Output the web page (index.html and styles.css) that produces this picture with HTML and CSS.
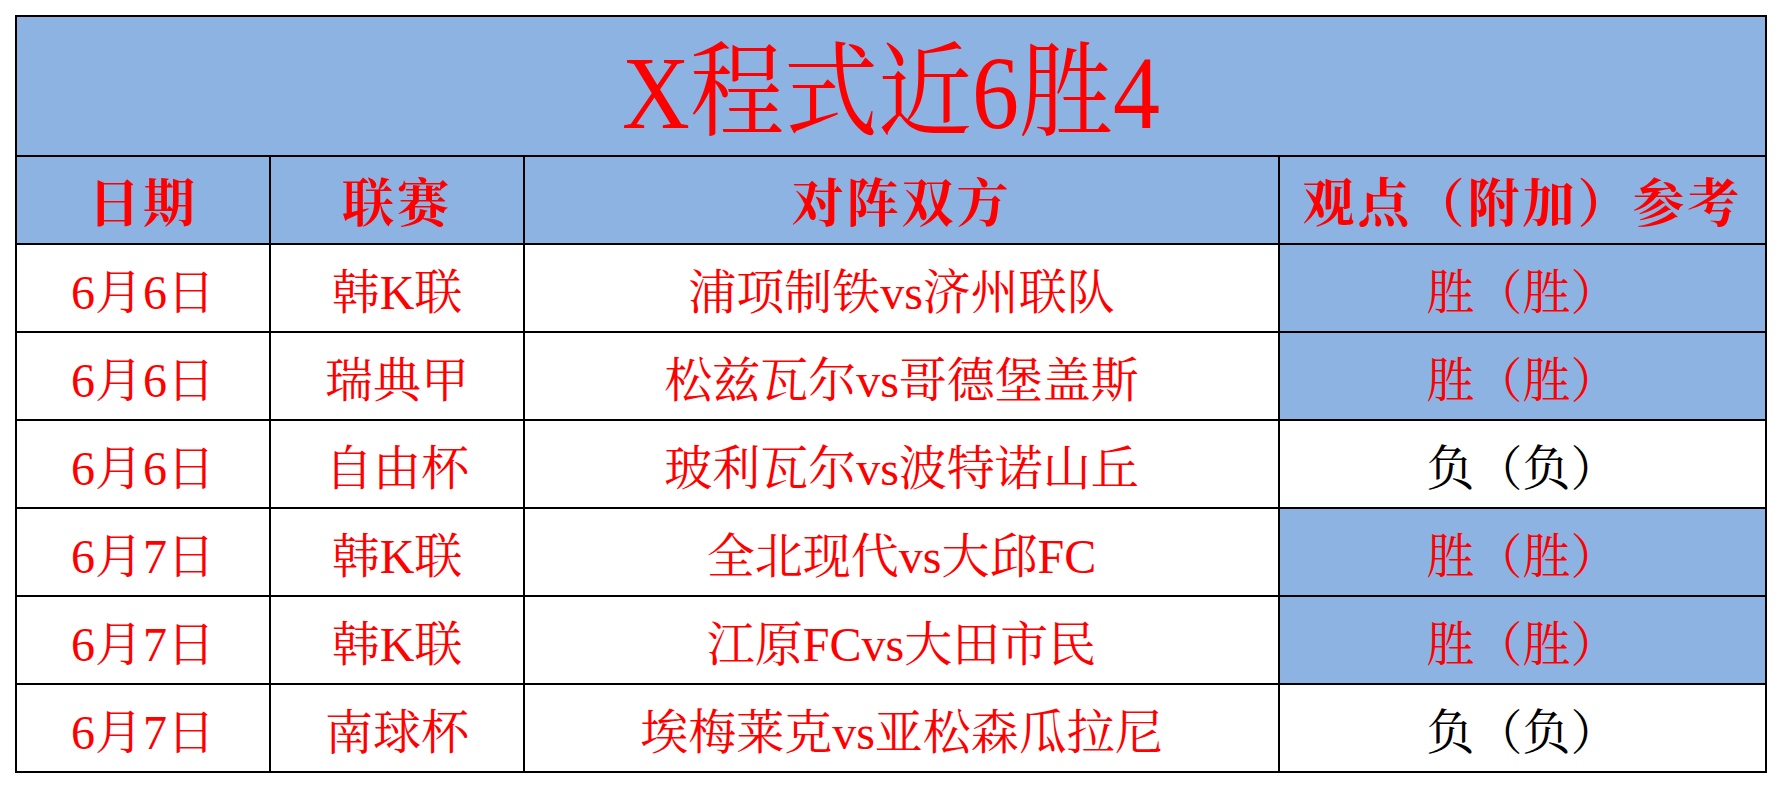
FILE: index.html
```html
<!DOCTYPE html>
<html lang="zh-CN">
<head>
<meta charset="utf-8">
<title>X程式近6胜4</title>
<link rel="stylesheet" href="styles.css">
</head>
<body>
<div class="sheet">
  <div class="cell title blue"><span>X程式近6胜4</span></div>

  <div class="cell head blue">日期</div>
  <div class="cell head blue">联赛</div>
  <div class="cell head blue">对阵双方</div>
  <div class="cell head blue">观点（附加）参考</div>

  <div class="cell data">6月6日</div>
  <div class="cell data">韩K联</div>
  <div class="cell data">浦项制铁vs济州联队</div>
  <div class="cell data blue">胜（胜）</div>

  <div class="cell data">6月6日</div>
  <div class="cell data">瑞典甲</div>
  <div class="cell data">松兹瓦尔vs哥德堡盖斯</div>
  <div class="cell data blue">胜（胜）</div>

  <div class="cell data">6月6日</div>
  <div class="cell data">自由杯</div>
  <div class="cell data">玻利瓦尔vs波特诺山丘</div>
  <div class="cell data black">负（负）</div>

  <div class="cell data">6月7日</div>
  <div class="cell data">韩K联</div>
  <div class="cell data">全北现代vs大邱FC</div>
  <div class="cell data blue">胜（胜）</div>

  <div class="cell data">6月7日</div>
  <div class="cell data">韩K联</div>
  <div class="cell data">江原FCvs大田市民</div>
  <div class="cell data blue">胜（胜）</div>

  <div class="cell data">6月7日</div>
  <div class="cell data">南球杯</div>
  <div class="cell data">埃梅莱克vs亚松森瓜拉尼</div>
  <div class="cell data black">负（负）</div>
</div>
</body>
</html>
```

FILE: styles.css
```css
html, body {
  margin: 0;
  padding: 0;
  background: #ffffff;
}

body {
  padding: 15px 0 0 15px;
  font-family: "Liberation Serif", "Noto Serif CJK SC", "Noto Sans CJK SC", serif;
}

.sheet {
  display: grid;
  grid-template-columns: 252px 252px 753px 485px;
  grid-template-rows: 138px repeat(7, 86px);
  gap: 2px;
  padding: 2px;
  background: #000000;
  width: max-content;
}

.cell {
  display: flex;
  align-items: center;
  justify-content: center;
  background: #ffffff;
  color: #ff0000;
  white-space: nowrap;
  line-height: 1;
}

.cell.blue {
  background: #8db3e2;
}

.cell.black {
  color: #000000;
}

.title {
  grid-column: 1 / -1;
  font-size: 94px;
  padding-top: 14px;
  box-sizing: border-box;
}

.title span {
  display: inline-block;
  transform: scaleY(1.1);
}

.head {
  font-size: 52px;
  font-weight: bold;
  letter-spacing: 3px;
  padding-top: 10px;
  box-sizing: border-box;
}

.data {
  font-size: 48px;
  padding-top: 10px;
  box-sizing: border-box;
}
```
